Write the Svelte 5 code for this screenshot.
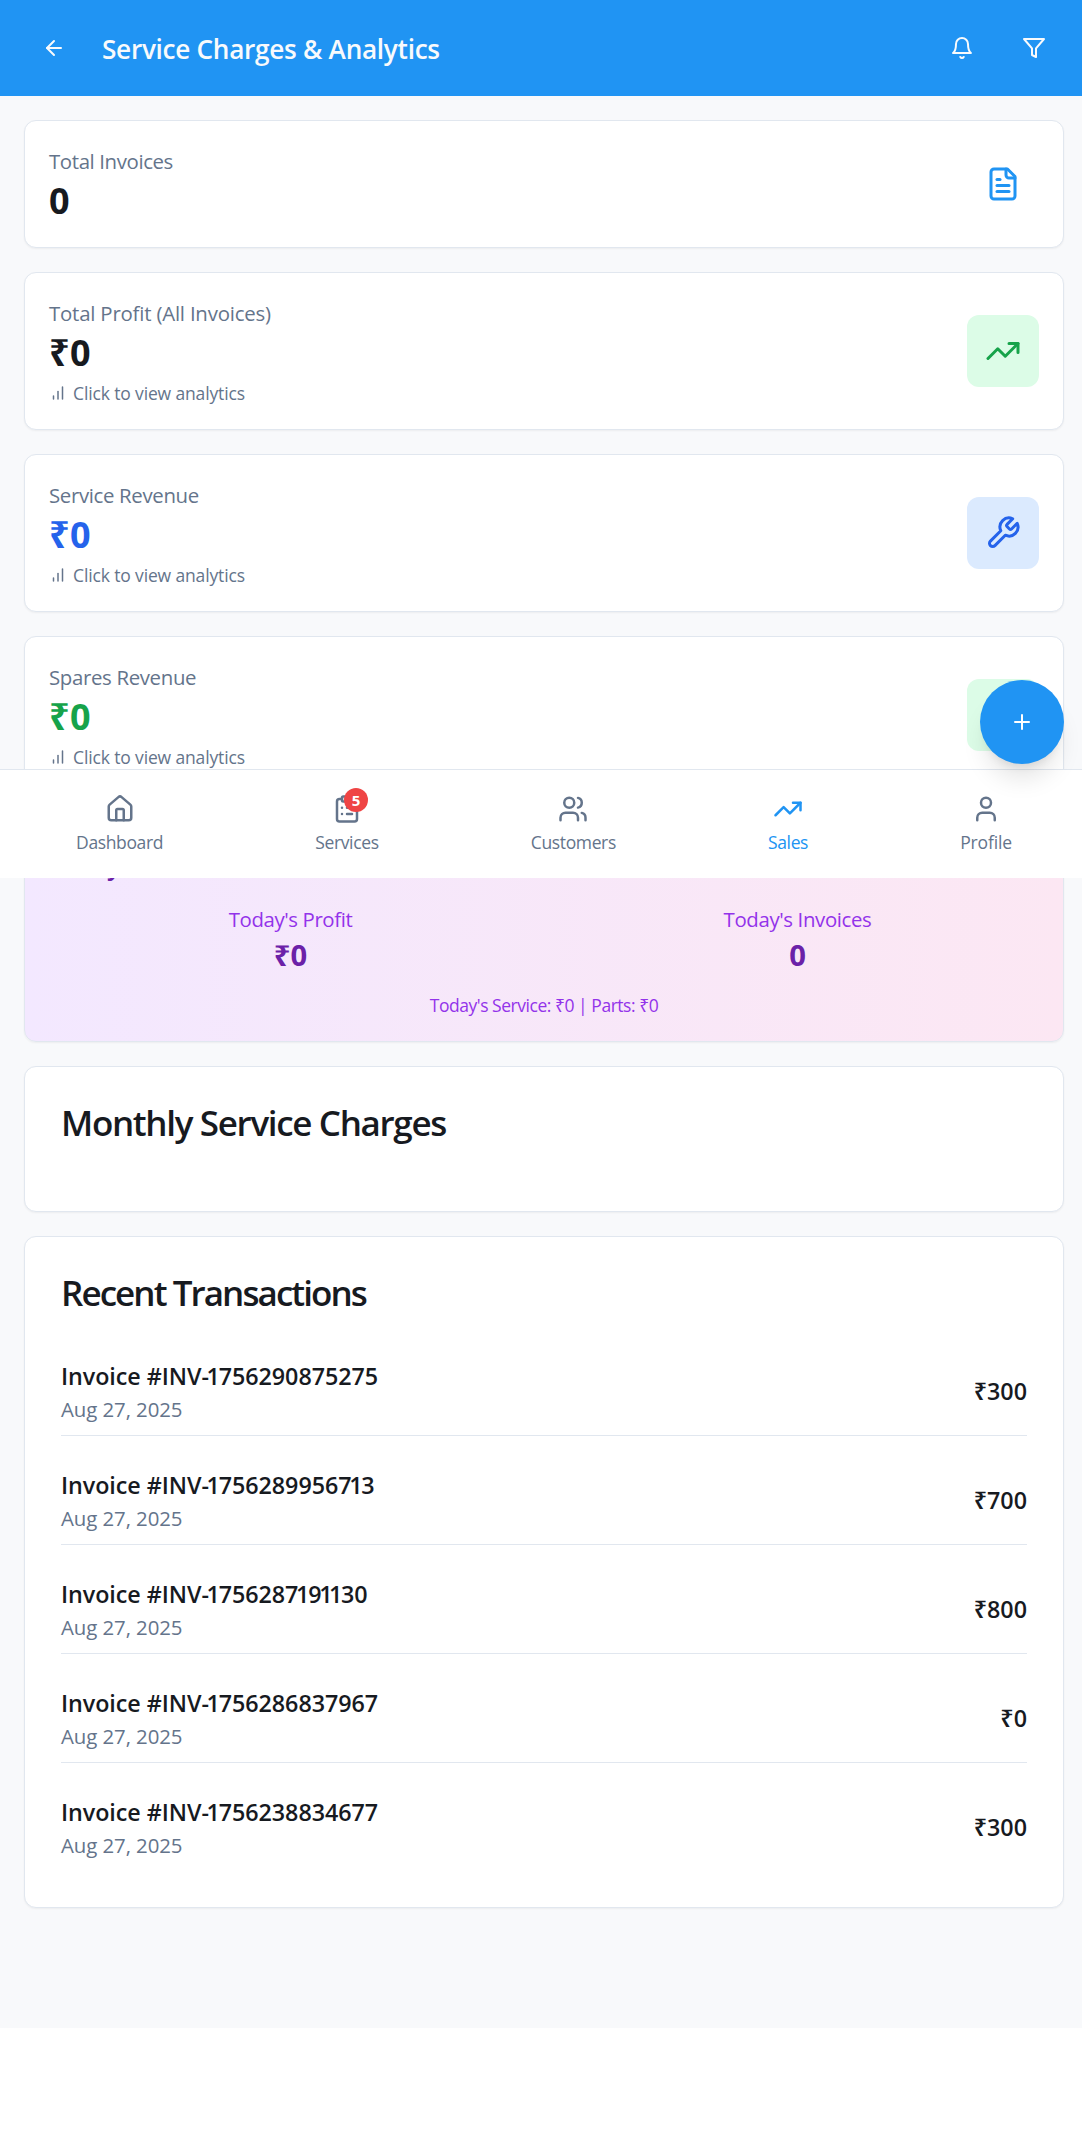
<script>
  const icons = {
    back: ['m12 19-7-7 7-7', 'M19 12H5'],
    bell: ['M6 8a6 6 0 0 1 12 0c0 7 3 9 3 9H3s3-2 3-9', 'M10.3 21a1.94 1.94 0 0 0 3.4 0'],
    filter: ['M22 3H2l8 9.46V19l4 2v-8.54L22 3z'],
    file: ['M15 2H6a2 2 0 0 0-2 2v16a2 2 0 0 0 2 2h12a2 2 0 0 0 2-2V7Z', 'M14 2v4a2 2 0 0 0 2 2h4', 'M10 9H8', 'M16 13H8', 'M16 17H8'],
    trend: ['m22 7-8.5 8.5-5-5L2 17', 'M16 7h6v6'],
    wrench: ['M14.7 6.3a1 1 0 0 0 0 1.4l1.6 1.6a1 1 0 0 0 1.4 0l3.77-3.77a6 6 0 0 1-7.94 7.94l-6.91 6.91a2.12 2.12 0 0 1-3-3l6.91-6.91a6 6 0 0 1 7.94-7.94l-3.76 3.76z'],
    box: ['M11 21.73a2 2 0 0 0 2 0l7-4A2 2 0 0 0 21 16V8a2 2 0 0 0-1-1.73l-7-4a2 2 0 0 0-2 0l-7 4A2 2 0 0 0 3 8v8a2 2 0 0 0 1 1.73z', 'M12 22V12', 'm3.3 7 8.7 5 8.7-5'],
    bars: ['M12 20V10', 'M18 20V4', 'M6 20v-4'],
    plus: ['M5 12h14', 'M12 5v14'],
    home: ['M15 21v-8a1 1 0 0 0-1-1h-4a1 1 0 0 0-1 1v8', 'M3 10a2 2 0 0 1 .709-1.528l7-5.999a2 2 0 0 1 2.582 0l7 5.999A2 2 0 0 1 21 10v9a2 2 0 0 1-2 2H5a2 2 0 0 1-2-2z'],
    clipboard: ['M9 2h6a1 1 0 0 1 1 1v2a1 1 0 0 1-1 1H9a1 1 0 0 1-1-1V3a1 1 0 0 1 1-1z', 'M16 4h2a2 2 0 0 1 2 2v14a2 2 0 0 1-2 2H6a2 2 0 0 1-2-2V6a2 2 0 0 1 2-2h2', 'M12 11h4', 'M12 16h4', 'M8 11h.01', 'M8 16h.01'],
    users: ['M16 21v-2a4 4 0 0 0-4-4H6a4 4 0 0 0-4 4v2', 'M9 3a4 4 0 1 0 0 8 4 4 0 0 0 0-8z', 'M22 21v-2a4 4 0 0 0-3-3.87', 'M16 3.13a4 4 0 0 1 0 7.75'],
    user: ['M19 21v-2a4 4 0 0 0-4-4H9a4 4 0 0 0-4 4v2', 'M12 3a4 4 0 1 0 0 8 4 4 0 0 0 0-8z']
  };

  const stats = [
    { id: 'invoices', label: 'Total Invoices', value: '0', icon: 'file', link: false },
    { id: 'profit', label: 'Total Profit (All Invoices)', value: '₹0', icon: 'trend', link: true },
    { id: 'service', label: 'Service Revenue', value: '₹0', icon: 'wrench', link: true },
    { id: 'spares', label: 'Spares Revenue', value: '₹0', icon: 'box', link: true }
  ];

  const transactions = [
    { id: '1756290875275', amount: 300 },
    { id: '1756289956713', amount: 700 },
    { id: '1756287191130', amount: 800 },
    { id: '1756286837967', amount: 0 },
    { id: '1756238834677', amount: 300 }
  ];

  const tabs = [
    { label: 'Dashboard', icon: 'home' },
    { label: 'Services', icon: 'clipboard', badge: 5 },
    { label: 'Customers', icon: 'users' },
    { label: 'Sales', icon: 'trend', active: true },
    { label: 'Profile', icon: 'user' }
  ];
</script>

{#snippet icon(name, size)}
  <svg class="icon" width={size} height={size} viewBox="0 0 24 24" aria-hidden="true">
    {#each icons[name] as d}<path {d} />{/each}
  </svg>
{/snippet}

<div class="viewport">
  <div class="page">
    <header class="topbar">
      <button class="icon-btn" aria-label="Back">{@render icon('back', 24)}</button>
      <h1>Service Charges &amp; Analytics</h1>
      <button class="icon-btn" aria-label="Notifications">{@render icon('bell', 24)}</button>
      <button class="icon-btn" aria-label="Filter">{@render icon('filter', 24)}</button>
    </header>

    <main>
      {#each stats as s}
        <section class="card stat {s.id}">
          <div>
            <p class="label">{s.label}</p>
            <p class="value">{s.value}</p>
            {#if s.link}
              <p class="hint">{@render icon('bars', 18)}<span>Click to view analytics</span></p>
            {/if}
          </div>
          <div class="tile">{@render icon(s.icon, 36)}</div>
        </section>
      {/each}

      <section class="card today">
        <h2>Today's Stats</h2>
        <div class="cols">
          <div>
            <p class="label profit-label">Today's Profit</p>
            <p class="amount">₹0</p>
          </div>
          <div>
            <p class="label">Today's Invoices</p>
            <p class="amount">0</p>
          </div>
        </div>
        <p class="note">Today's Service: ₹0 | Parts: ₹0</p>
      </section>

      <section class="card panel monthly">
        <h3>Monthly Service Charges</h3>
      </section>

      <section class="card panel recent">
        <h3>Recent Transactions</h3>
        <ul>
          {#each transactions as t}
            <li>
              <div>
                <p class="invoice">Invoice #INV-{#each t.id as digit}{#if digit === '1'}<span class="one">1</span>{:else}{digit}{/if}{/each}</p>
                <p class="date">Aug 27, 2025</p>
              </div>
              <span class="total">₹{t.amount}</span>
            </li>
          {/each}
        </ul>
      </section>
    </main>

    <nav>
      {#each tabs as tab}
        <button class="tab {tab.label.toLowerCase()}" class:active={tab.active}>
          <span class="tab-icon">
            {@render icon(tab.icon, 30)}
            {#if tab.badge}<span class="badge">{tab.badge}</span>{/if}
          </span>
          <span class="tab-label">{tab.label}</span>
        </button>
      {/each}
    </nav>

    <button class="fab" aria-label="Add">{@render icon('plus', 24)}</button>
  </div>
</div>

<style>
  :global(body) {
    background: #fff;
  }
  .viewport {
    overflow: hidden;
    min-height: 2148px;
    font-family: 'Open Sans', 'Noto Sans', sans-serif;
    color: #171a1f;
  }
  /* The layout is a little wider than the window, so its right edge is cut */
  .page {
    position: relative;
    width: 1088px;
    box-sizing: border-box;
    height: 2028px;
    background: #f8f9fb;
  }
  h1, h2, h3, p, ul {
    margin: 0;
    padding: 0;
    list-style: none;
  }
  button {
    border: 0;
    padding: 0;
    background: none;
    font: inherit;
    color: inherit;
  }
  .icon {
    display: block;
    flex: none;
    fill: none;
    stroke: currentColor;
    stroke-width: 2;
    stroke-linecap: round;
    stroke-linejoin: round;
  }

  .topbar {
    display: flex;
    align-items: center;
    gap: 12px;
    height: 96px;
    padding: 0 24px;
    box-sizing: border-box;
    background: #2094f3;
    color: #f8fafc;
  }
  .icon-btn {
    display: grid;
    place-items: center;
    width: 60px;
    height: 60px;
  }
  h1 {
    flex: 1;
    margin-left: 6px;
    height: 42px;
    font-size: 26.2px;
    font-weight: 600;
    line-height: 44px;
    letter-spacing: -0.3px;
  }

  main {
    display: flex;
    flex-direction: column;
    gap: 24px;
    padding: 24px;
  }
  .card {
    box-sizing: border-box;
    border: 1px solid #e1e7ef;
    border-radius: 12px;
    background: #fff;
    box-shadow: 0 1px 2px rgba(0, 0, 0, 0.05);
  }
  .stat {
    display: flex;
    align-items: center;
    justify-content: space-between;
    padding: 24px;
  }
  .label {
    height: 30px;
    font-size: 20.4px;
    line-height: 32px;
    letter-spacing: -0.34px;
    color: #64748b;
  }
  .invoices .label { letter-spacing: -0.38px; }
  .profit .label { letter-spacing: -0.2px; }
  .value {
    height: 48px;
    font-size: 36px;
    font-weight: 700;
    line-height: 52px;
    letter-spacing: 0.3px;
  }
  .hint {
    display: flex;
    align-items: center;
    gap: 6px;
    height: 24px;
    margin-top: 6px;
    font-size: 17.5px;
    line-height: 24px;
    letter-spacing: -0.14px;
    color: #64748b;
  }
  .tile {
    display: grid;
    place-items: center;
    width: 72px;
    height: 72px;
    border-radius: 12px;
  }
  .invoices .tile { color: #2094f3; }
  .profit .tile, .spares .tile { background: #dcfce7; color: #16a34a; }
  .service .tile { background: #dbeafe; color: #2563eb; }
  .service .value { color: #2563eb; }
  .spares .value { color: #16a34a; }

  .today {
    padding: 24px;
    background: linear-gradient(to right, #f3e8ff, #fce7f3);
    color: #6b21a8;
    text-align: center;
  }
  .today h2 {
    height: 42px;
    margin-bottom: 18px;
    font-size: 26.2px;
    font-weight: 600;
    line-height: 42px;
    letter-spacing: -1px;
    text-align: left;
  }
  .cols {
    display: grid;
    grid-template-columns: 1fr 1fr;
    gap: 24px;
  }
  .today .label { color: #9333ea; letter-spacing: -0.37px; }
  .today .profit-label { letter-spacing: -0.4px; }
  .amount {
    height: 42px;
    font-size: 29.2px;
    font-weight: 700;
    line-height: 44px;
  }
  .note {
    height: 24px;
    margin-top: 18px;
    font-size: 17.5px;
    line-height: 24px;
    letter-spacing: -0.47px;
    color: #9333ea;
  }

  .panel {
    padding: 36px;
  }
  .panel h3 {
    height: 36px;
    margin-bottom: 36px;
    font-size: 35px;
    font-weight: 600;
    line-height: 40px;
    letter-spacing: -1.33px;
  }
  .monthly {
    height: 146px;
  }
  .recent h3 {
    letter-spacing: -1.93px;
  }
  ul {
    display: flex;
    flex-direction: column;
    gap: 18px;
  }
  li {
    display: flex;
    align-items: center;
    justify-content: space-between;
    padding: 12px 0;
    border-bottom: 1px solid #e1e7ef;
  }
  li:last-child {
    border-bottom: 0;
  }
  .invoice {
    height: 36px;
    font-size: 23.3px;
    font-weight: 600;
    line-height: 38px;
    letter-spacing: -0.05px;
  }
  /* Tighter side bearings for the narrow digit */
  .one {
    margin: 0 -1.2px 0 -2.3px;
  }
  .date {
    height: 30px;
    font-size: 20.4px;
    line-height: 32px;
    letter-spacing: -0.07px;
    color: #64748b;
  }
  .total {
    height: 36px;
    font-size: 23.3px;
    font-weight: 600;
    line-height: 38px;
  }

  nav {
    position: absolute;
    top: 769px;
    left: 0;
    right: 0;
    display: flex;
    justify-content: space-around;
    height: 109px;
    padding: 12px 0;
    box-sizing: border-box;
    border-top: 1px solid #e1e7ef;
    background: #fff;
  }
  .tab {
    display: flex;
    flex-direction: column;
    align-items: center;
    gap: 6px;
    padding: 12px 0;
    color: #64748b;
  }
  .tab.active {
    color: #2094f3;
  }
  .tab-icon {
    position: relative;
  }
  .badge {
    position: absolute;
    top: -6px;
    right: -6px;
    width: 24px;
    height: 24px;
    border-radius: 50%;
    background: #ef4444;
    color: #fff;
    font-size: 15px;
    font-weight: 700;
    line-height: 25px;
    text-align: center;
  }
  .tab-label {
    height: 24px;
    font-size: 17.5px;
    line-height: 24px;
    letter-spacing: -0.36px;
  }
  .profile .tab-label { letter-spacing: -0.15px; }

  .fab {
    position: absolute;
    top: 680px;
    right: 24px;
    display: grid;
    place-items: center;
    width: 84px;
    height: 84px;
    border-radius: 50%;
    background: #2094f3;
    color: #fff;
    box-shadow: 0 20px 25px -5px rgba(0, 0, 0, 0.1), 0 8px 10px -6px rgba(0, 0, 0, 0.1);
  }
</style>
